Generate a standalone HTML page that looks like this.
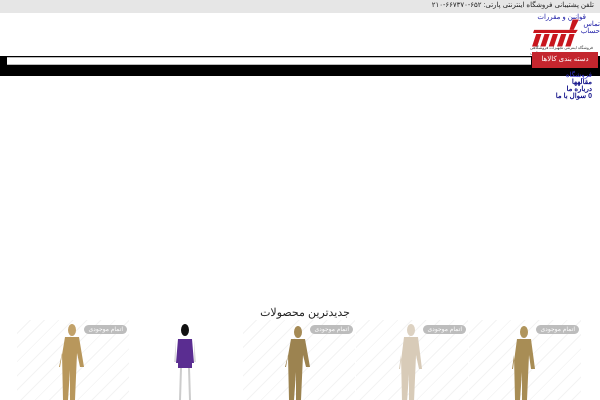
<!DOCTYPE html>
<html><head><meta charset="utf-8"><style>
*{margin:0;padding:0;box-sizing:border-box}
body{width:600px;height:400px;overflow:hidden;background:#fff;font-family:"Liberation Sans","Noto Sans CJK SC",sans-serif;position:relative}
.a{position:absolute}
.top{left:0;top:0;width:600px;height:13px;background:#e6e6e6;font-size:7px;color:#222;text-align:right;padding-right:6px;line-height:11px;direction:rtl}
.lnk{font-size:7px;color:#1a1aa6;direction:rtl;text-align:right;line-height:8px}
.card{top:320px;width:112px;height:80px;background:repeating-linear-gradient(135deg,#fff 0 9px,#f3f3f3 9px 10px)}
.badge{position:absolute;top:5px;right:2px;background:#bdbdbd;color:#fff;font-size:6px;border-radius:6px;padding:1px 4px;direction:rtl}
</style></head><body>
<div class="a top">تلفن پشتیبانی فروشگاه اینترنتی پارتی: ۶۵۲-۶۶۷۳۷۰-۲۱۰</div>
<div class="a lnk" style="right:14px;top:14px">قوانین و مقررات</div>
<div class="a lnk" style="right:0;top:21px">تماس</div>
<div class="a lnk" style="right:0;top:28px">حساب</div>
<svg class="a" style="left:531px;top:19px" width="52" height="30" viewBox="0 0 50 28">
<g fill="#c8161d"><path d="M3 10h42l-2 3H2z"/><path d="M5 14h5l-4 12H1z"/><path d="M13 14h5l-4 12H9z"/><path d="M21 14h5l-4 12h-5z"/><path d="M29 14h5l-4 12h-5z"/><path d="M37 14h5l-4 12h-5z"/><path d="M40 0h6l-5 10h-4z"/></g></svg>
<div class="a" style="left:530px;top:45px;font-size:4px;color:#333">فروشگاه اینترنتی تجهیزات فروشگاهی پارتی</div>
<div class="a" style="left:0;top:56px;width:600px;height:20px;background:#000"></div>
<div class="a" style="left:7px;top:57px;width:524px;height:8px;background:#fff;border-top:1px solid #bbb;border-bottom:1px solid #bbb"></div>
<div class="a" style="left:532px;top:52px;width:66px;height:16px;background:#c4262e;color:#fff;font-size:7px;text-align:center;line-height:16px;direction:rtl">دسته بندی کالاها</div>
<div class="a lnk" style="right:8px;top:72px;color:#33c">فروشگاه</div>
<div class="a lnk" style="right:8px;top:79px;font-weight:bold;color:#11118a">مقالهها</div>
<div class="a lnk" style="right:8px;top:86px;font-weight:bold;color:#11118a">درباره ما</div>
<div class="a lnk" style="right:8px;top:93px;font-weight:bold;color:#11118a">0 سوال با ما</div>
<div class="a" style="left:0;top:306px;width:610px;text-align:center;font-size:11px;color:#222">جدیدترین محصولات</div>
<div class="a card" style="left:17px"><div class="badge">اتمام موجودی</div>
<svg class="a" style="left:38px;top:3px" width="34" height="77"><ellipse cx="17" cy="7" rx="4" ry="6" fill="#c2a26a"/><path d="M10 14h14l5 30h-4l-3-14-2 47h-5l0-30-2 30h-5l-1-47-3 14H5z" fill="#b8975c"/></svg></div>
<div class="a card" style="left:130px;background:#fff">
<svg class="a" style="left:38px;top:2px" width="34" height="78"><ellipse cx="17" cy="8" rx="4" ry="6" fill="#111"/><path d="M10 17h14l2 24H8z" fill="#5a2d91"/><rect x="10" y="41" width="14" height="5" fill="#5a2d91"/><path d="M8 18l-2 22h2zM26 18l2 22h-2z" fill="#ddd"/><path d="M12 46h2l-1 32h-2zM20 46h2l1 32h-2z" fill="#ccc"/></svg></div>
<div class="a card" style="left:243px"><div class="badge">اتمام موجودی</div>
<svg class="a" style="left:38px;top:5px" width="34" height="75"><ellipse cx="17" cy="7" rx="4" ry="6" fill="#a58a55"/><path d="M10 14h14l5 28h-4l-3-12-2 45h-5l0-28-2 28h-5l-1-45-3 12H5z" fill="#9c8350"/></svg></div>
<div class="a card" style="left:356px"><div class="badge">اتمام موجودی</div>
<svg class="a" style="left:38px;top:3px" width="34" height="77"><ellipse cx="17" cy="7" rx="4" ry="6" fill="#ddd2c2"/><path d="M10 14h14l4 32h-3l-3-14-2 47h-5l0-28-2 28h-5l-1-47-2 14H6z" fill="#d8cbb8"/></svg></div>
<div class="a card" style="left:469px"><div class="badge">اتمام موجودی</div>
<svg class="a" style="left:38px;top:5px" width="34" height="75"><ellipse cx="17" cy="7" rx="4" ry="6" fill="#b0955c"/><path d="M10 14h14l4 30h-4l-2-14-2 45h-5l0-28-2 28h-5l-1-45-2 14H6z" fill="#a88d55"/></svg></div>
</body></html>
